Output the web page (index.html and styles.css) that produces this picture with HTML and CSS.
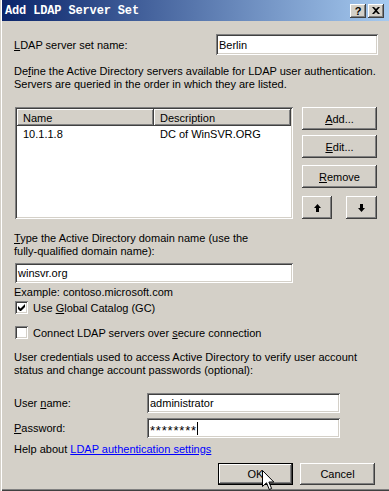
FILE: index.html
```html
<!DOCTYPE html>
<html lang="en">
<head>
    <meta charset="UTF-8">
    <title>Add LDAP Server Set</title>
    <link rel="stylesheet" href="styles.css">
</head>
<body>
    <div class="window">
        <div class="titlebar">
            <span class="title">Add LDAP Server Set</span>
            <div class="caption-btns">
                <span class="cap-btn">?</span>
                <span class="cap-btn">
                    <svg width="8" height="7" viewBox="0 0 8 7"><path d="M0 0h2l2 2 2-2h2L5 3.5 8 7H6L4 5 2 7H0l3-3.5z" fill="#000"/></svg>
                </span>
            </div>
        </div>

        <div class="content">
            <div class="row-name">
                <span><u>L</u>DAP server set name:</span>
                <div class="field field-name">Berlin</div>
            </div>

            <p class="text desc">De<u>f</u>ine the Active Directory servers available for LDAP user authentication.<br>Servers are queried in the order in which they are listed.</p>

            <div class="servers">
                <div class="list">
                    <div class="list-head">
                        <span class="head-cell col-name">Name</span>
                        <span class="head-cell col-desc">Description</span>
                    </div>
                    <div class="list-row">
                        <span class="col-name">10.1.1.8</span>
                        <span class="col-desc">DC of WinSVR.ORG</span>
                    </div>
                </div>
                <div class="list-btns">
                    <div class="btn btn-add"><u>A</u>dd...</div>
                    <div class="btn btn-edit"><u>E</u>dit...</div>
                    <div class="btn btn-remove"><u>R</u>emove</div>
                    <div class="arrows">
                        <div class="btn btn-up">
                            <svg width="7" height="8" viewBox="0 0 7 8"><path d="M3.5 0L7 4H5v4H2V4H0z" fill="#000"/></svg>
                        </div>
                        <div class="btn btn-down">
                            <svg width="7" height="8" viewBox="0 0 7 8"><path d="M3.5 8L7 4H5V0H2v4H0z" fill="#000"/></svg>
                        </div>
                    </div>
                </div>
            </div>

            <p class="text domain-label"><u>T</u>ype the Active Directory domain name (use the<br>fully-qualified domain name):</p>
            <div class="field field-domain">winsvr.org</div>
            <p class="text example">Example: contoso.microsoft.com</p>

            <div class="check check-gc">
                <span class="box">
                    <svg width="7" height="7" viewBox="0 0 7 7"><path d="M0 2v3l2 2h1l4-4V0L2.5 4.5z" fill="#000"/></svg>
                </span>
                <span>Use <u>G</u>lobal Catalog (GC)</span>
            </div>
            <div class="check check-secure">
                <span class="box"></span>
                <span>Connect LDAP servers over <u>s</u>ecure connection</span>
            </div>

            <p class="text creds">User credentials used to access Active Directory to verify user account<br>status and change account passwords (optional):</p>

            <div class="row-user">
                <span>User <u>n</u>ame:</span>
                <div class="field field-user">administrator</div>
            </div>
            <div class="row-pass">
                <span><u>P</u>assword:</span>
                <div class="field field-user"><span class="stars">********</span><span class="caret"></span></div>
            </div>

            <p class="text help">Help about <a href="#">LDAP authentication settings</a></p>

            <div class="footer">
                <div class="btn btn-ok">OK
                    <svg class="cursor" width="13" height="21" viewBox="0 0 13 21"><path d="M0.5 0.5V16.5L4.5 12.8L7.3 19.5L9.6 18.5L6.9 12H11.8Z" fill="#fff" stroke="#000" stroke-width="1"/></svg>
                </div>
                <div class="btn btn-cancel">Cancel</div>
            </div>
        </div>
    </div>
</body>
</html>
```

FILE: styles.css
```css
:root {
    --face: #d4d0c8;
    --shadow: #808080;
    --dark: #404040;
}

body {
    margin: 0;
    background: var(--face);
    font-family: 'Liberation Sans', Arial, sans-serif;
    font-size: 11px;
    color: #000;
}

.window {
    width: 389px;
    height: 491px;
    box-sizing: border-box;
    padding-left: 2px;
    background: var(--face);
    box-shadow: inset 1px 0 var(--face), inset 2px 0 #fff, inset 0 -1px var(--dark), inset 0 -2px var(--shadow);
    overflow: hidden;
}

.titlebar {
    height: 21px;
    display: flex;
    align-items: center;
    justify-content: space-between;
    padding: 0 5px 0 3px;
    background: linear-gradient(to right, #0a246a, #a6caf0);
}

.title {
    font-family: 'Liberation Mono', monospace;
    font-weight: bold;
    font-size: 12px;
    letter-spacing: -0.15px;
    color: #fff;
}

.caption-btns {
    display: flex;
    gap: 2px;
}

.cap-btn {
    width: 16px;
    height: 14px;
    display: flex;
    align-items: center;
    justify-content: center;
    background: var(--face);
    font-weight: bold;
    font-size: 11px;
    box-shadow: inset -1px -1px var(--dark), inset 1px 1px #fff, inset -2px -2px var(--shadow);
}

.content {
    padding: 13px 11px 0 12px;
}

.text {
    margin: 0;
    line-height: 13px;
}

u {
    text-decoration: underline;
}

/* campos de texto */
.field {
    box-sizing: border-box;
    background: #fff;
    padding: 0 3px;
    display: flex;
    align-items: center;
    white-space: nowrap;
    box-shadow: inset 1px 1px var(--shadow), inset -1px -1px #fff, inset 2px 2px var(--dark), inset -2px -2px var(--face);
}

.row-name {
    height: 21px;
    display: flex;
    align-items: center;
    justify-content: space-between;
}

.field-name {
    width: 162px;
    height: 21px;
}

.desc {
    margin-top: 10px;
}

.servers {
    margin-top: 16px;
    margin-left: 1px;
    display: grid;
    grid-template-columns: 278px 75px;
    column-gap: 9px;
}

.list {
    height: 112px;
    box-sizing: border-box;
    padding: 2px;
    background: #fff;
    box-shadow: inset 1px 1px var(--shadow), inset -1px -1px #fff, inset 2px 2px var(--dark), inset -2px -2px var(--face);
}

.list-head,
.list-row {
    display: flex;
}

.head-cell {
    height: 17px;
    box-sizing: border-box;
    padding: 0 6px;
    display: flex;
    align-items: center;
    background: var(--face);
    box-shadow: inset -1px -1px var(--dark), inset 1px 1px #fff, inset -2px -2px var(--shadow);
}

.col-name {
    width: 137px;
    box-sizing: border-box;
}

.col-desc {
    flex: 1;
    box-sizing: border-box;
}

.list-row {
    height: 15px;
    align-items: center;
}

.list-row span {
    padding: 0 6px;
}

/* botões */
.btn {
    box-sizing: border-box;
    height: 23px;
    display: flex;
    align-items: center;
    justify-content: center;
    background: var(--face);
    box-shadow: inset -1px -1px var(--dark), inset 1px 1px #fff, inset -2px -2px var(--shadow);
}

.list-btns {
    display: flex;
    flex-direction: column;
}

.btn-edit {
    margin-top: 5px;
}

.btn-remove {
    margin-top: 7px;
}

.arrows {
    margin-top: 8px;
    display: flex;
    justify-content: space-between;
}

.btn-up {
    width: 30px;
}

.btn-down {
    width: 31px;
}

.domain-label {
    margin-top: 13px;
}

.field-domain {
    margin: 5px 0 0 1px;
    width: 278px;
    height: 20px;
}

.example {
    margin-top: 3px;
}

.check {
    height: 17px;
    margin-left: 1px;
    display: flex;
    align-items: center;
    gap: 5px;
}

.check-gc {
    margin-top: 0;
}

.check-secure {
    margin-top: 8px;
}

.box {
    width: 13px;
    height: 13px;
    box-sizing: border-box;
    display: flex;
    align-items: center;
    justify-content: center;
    background: #fff;
    box-shadow: inset 1px 1px var(--shadow), inset -1px -1px #fff, inset 2px 2px var(--dark), inset -2px -2px var(--face);
}

.creds {
    margin-top: 10px;
}

.row-user,
.row-pass {
    display: grid;
    grid-template-columns: 133px 193px;
    align-items: center;
}

.row-user {
    margin-top: 16px;
}

.row-pass {
    margin-top: 5px;
}

.field-user {
    height: 20px;
}

.stars {
    font-size: 13px;
    letter-spacing: 0.8px;
    line-height: 13px;
    padding-top: 4px;
}

.caret {
    width: 1px;
    height: 13px;
    background: #000;
}

.help {
    margin-top: 5px;
}

.help a {
    color: #0000ff;
}

.footer {
    margin: 7px 3px 0 0;
    display: flex;
    justify-content: flex-end;
    gap: 7px;
}

.footer .btn {
    width: 75px;
    height: 22px;
}

.btn-ok {
    position: relative;
    box-shadow: inset 0 0 0 1px #000, inset -2px -2px var(--dark), inset 2px 2px #fff, inset -3px -3px var(--shadow);
}

.cursor {
    position: absolute;
    left: 44px;
    top: 7px;
}
```
